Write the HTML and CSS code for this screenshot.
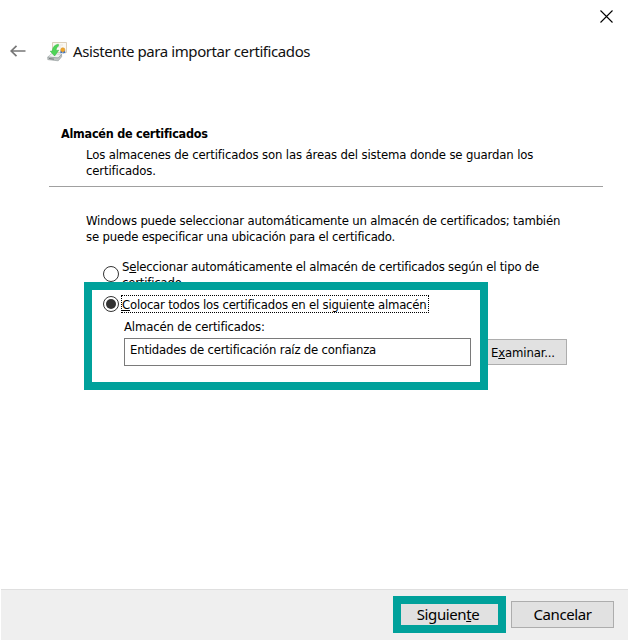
FILE: index.html
```html
<!DOCTYPE html>
<html lang="es">
<head>
<meta charset="utf-8">
<title>Asistente para importar certificados</title>
<link rel="stylesheet" href="styles.css">
</head>
<body>
<main class="wizard">
  <div class="caption">
    <svg class="close" width="13" height="13" viewBox="0 0 13 13"><path d="M.5.5l12 12M12.5.5L.5 12.5"/></svg>
  </div>
  <header class="titlebar">
    <svg class="back" width="16" height="12" viewBox="0 0 16 12"><path d="M1.2 6H15.5M6.5 .8L1.2 6l5.3 5.2"/></svg>
    <svg class="cert" width="21" height="21" viewBox="0 0 21 21">
      <path d="M5.5 1.5h14v10h-14z" fill="#fbf8f2" stroke="#dccfba"/>
      <path d="M10 4h6M11 6h3" stroke="#e2ded6" stroke-width=".8"/>
      <path d="M13.4 9.5h2v3.2l-1-.7-1 .5zM16.2 9.5h2v3l-1-.5-1 .7z" fill="#3c72bd"/>
      <circle cx="15.8" cy="8.8" r="2.1" fill="#f0a526" stroke="#d08a24" stroke-width=".5"/>
      <path d="M.8 16L4.6 12.6l10 .6-3.4 3.6z" fill="#f1f2f2" stroke="#b5baba" stroke-width=".7"/>
      <path d="M.8 16l10.4 1 3.4-3.6v2.4l-3.4 4L.8 18.6z" fill="#c0c5c5" stroke="#8c9394" stroke-width=".6"/>
      <path d="M2 17.2l5 .5v.9l-5-.5z" fill="#5f6667"/>
      <path d="M11.4 3.2C8 3.6 5.4 6.2 5.4 10l-2.2.2 4.4 4.8 4.2-5.8-2.6.3C9.2 7.4 9.8 6 11.4 5.2z" fill="#4fd558" stroke="#34b540" stroke-width=".5"/>
    </svg>
    <h1>Asistente para importar certificados</h1>
  </header>
  <section class="heading">
    <h2>Almacén de certificados</h2>
    <p class="intro">Los almacenes de certificados son las áreas del sistema donde se guardan los<br>certificados.</p>
  </section>
  <section class="content">
    <p class="explain">Windows puede seleccionar automáticamente un almacén de certificados; también<br>se puede especificar una ubicación para el certificado.</p>
    <div class="option auto">
      <span class="radio"></span>
      <span class="auto-label">S<u>e</u>leccionar automáticamente el almacén de certificados según el tipo de<br>certificado</span>
    </div>
    <div class="store-row">
      <div class="highlight store">
        <div class="option">
          <span class="radio checked"></span>
          <span class="focus"><span><u>C</u>olocar todos los certificados en el siguiente almacén</span></span>
        </div>
        <div class="store-label"><span>Almacén de certificados:</span></div>
        <div class="field"><span>Entidades de certificación raíz de confianza</span></div>
      </div>
      <div class="browse"><span>E<u>x</u>aminar...</span></div>
    </div>
  </section>
  <footer class="footer">
    <div class="highlight next"><span>Siguien<u>t</u>e</span></div>
    <div class="cancel"><span>Cancelar</span></div>
  </footer>
</main>
</body>
</html>
```
FILE: styles.css
```css
* { box-sizing: border-box; }
body { margin: 0; background: #fff; color: #000; }
h1, h2, p { margin: 0; }
u { text-decoration: underline; text-decoration-thickness: 1px; text-underline-offset: 1px; }
.wizard {
  width: 629px; height: 641px; padding: 0 1px 1px;
  display: flex; flex-direction: column; overflow: hidden;
  font: 13px/16px "DejaVu Sans Condensed", "DejaVu Sans", sans-serif;
  font-stretch: condensed;
  letter-spacing: -.14px;
  white-space: nowrap;
}
.caption { height: 36px; flex: none; display: flex; justify-content: flex-end; padding: 10px 15px 0 0; }
.close { fill: none; stroke: #000; stroke-width: 1.1; }
.titlebar { height: 32px; flex: none; display: flex; align-items: center; padding-left: 9px; }
.back { fill: none; stroke: #777; stroke-width: 1.7; margin-top: -2px; }
.cert { margin: -2px 0 0 21px; }
h1 { margin: -2px 0 0 5px; font: 400 15px/22px "Noto Sans", sans-serif; color: #111; letter-spacing: -.42px; }
.heading { height: 119px; flex: none; margin: 0 25px 0 48px; padding: 58px 0 0 12px; border-bottom: 1px solid #a0a0a0; }
h2 { font-size: 12.5px; line-height: 16px; font-weight: 700; letter-spacing: -.24px; }
.intro { margin: 5px 0 0 25px; }
.content { flex: 1; padding: 26px 0 0 83px; }
.explain { margin-left: 2px; letter-spacing: -.19px; }
.option { display: flex; }
.auto { height: 37px; padding: 14px 0 0 19px; }
.radio {
  width: 16px; height: 16px; flex: none; border: 1px solid #333; border-radius: 50%;
  display: flex; align-items: center; justify-content: center;
}
.radio.checked::after { content: ""; width: 10px; height: 10px; border-radius: 50%; background: #333; }
.auto .radio { margin-top: 7px; }
.auto-label { margin-left: 3px; letter-spacing: -.2px; }
.store-row { display: flex; position: relative; }
.highlight { border: 8px solid #00a19b; flex: none; }
.store { width: 404px; height: 108px; padding: 5px 0 0 11px; background: #fff; }
.store .radio { margin-top: 1px; }
.focus { width: 308px; height: 18px; margin-left: 2px; padding: 1px 0 0; border: 1px dotted #000; letter-spacing: -.21px; line-height: 15px; }
.store-label { height: 16px; margin: 6px 0 0 21px; letter-spacing: -.17px; }
.field { width: 347px; height: 28px; margin: 3px 0 0 21px; border: 1px solid #7a7a7a; padding: 3px 0 0 5px; letter-spacing: -.2px; }
.browse { width: 79px; height: 26px; margin-top: 57px; padding: 5px 0 0 3px; border: 1px solid #adadad; border-left: 0; background: #e1e1e1; }
.footer {
  height: 51px; flex: none; background: #efefef; border-top: 1px solid #dfdfdf;
  display: flex; justify-content: flex-end; align-items: flex-start; padding: 6px 14px 0 0;
  font: 15px/20px "Noto Sans", sans-serif; letter-spacing: -.4px;
}
.next, .cancel { display: flex; align-items: center; justify-content: center; background: #e1e1e1; padding-bottom: 2px; }
.next { width: 113px; height: 37px; padding-right: 3px; }
.cancel { width: 103px; height: 27px; margin: 5px 0 0 5px; border: 1px solid #adadad; }
```
